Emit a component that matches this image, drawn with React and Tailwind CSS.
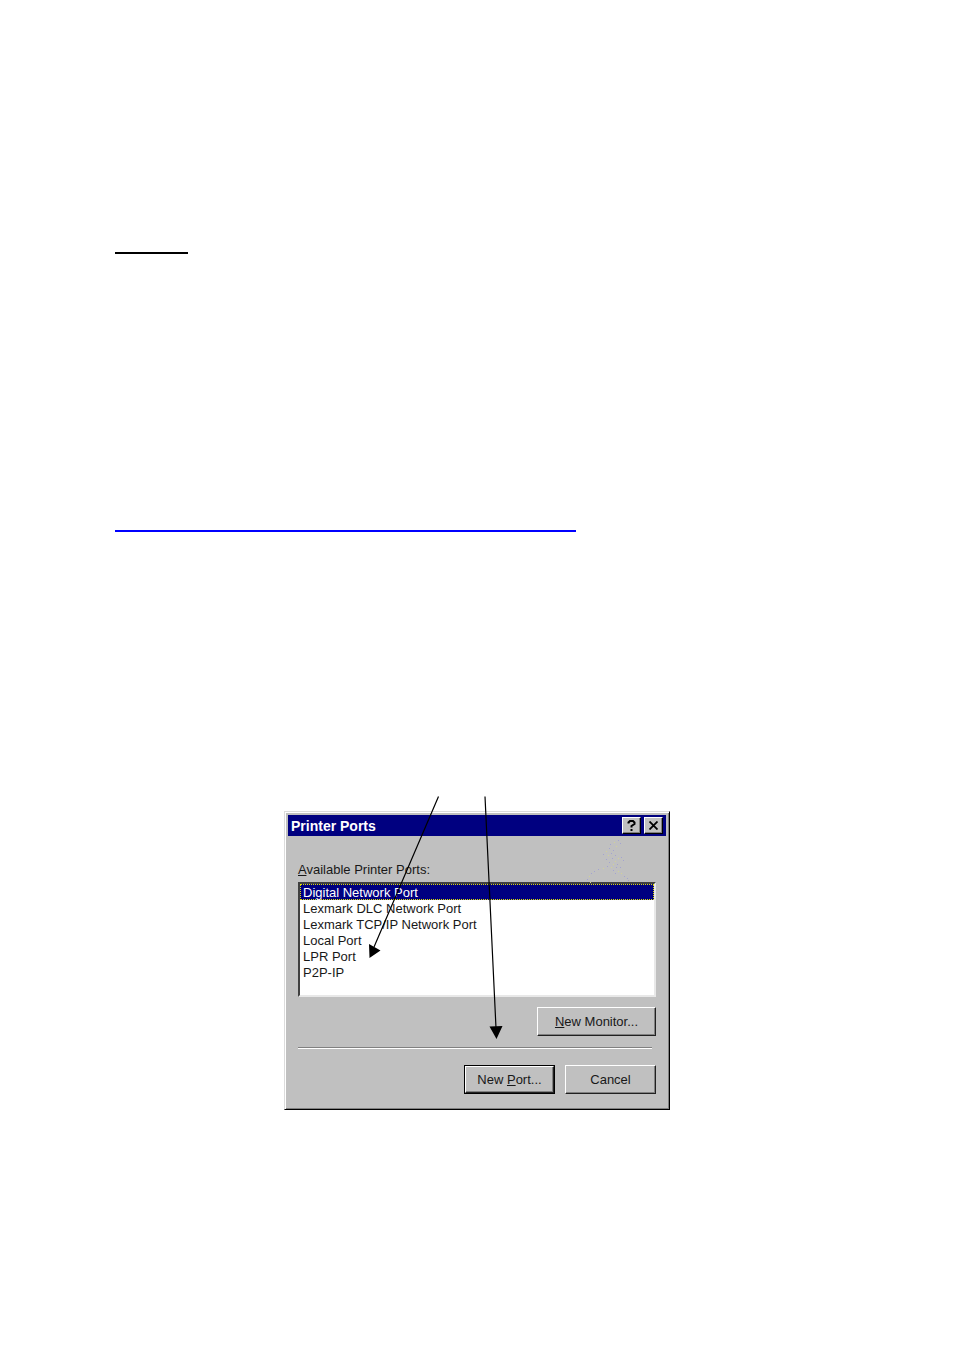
import React, { useState } from 'react';

const ports = [
  'Digital Network Port',
  'Lexmark DLC Network Port',
  'Lexmark TCP/IP Network Port',
  'Local Port',
  'LPR Port',
  'P2P-IP',
];

// faint speckles behind the upper right corner of the dialog
const specks = [
  [49, 0], [45, 2], [51, 3], [41, 4], [47, 6], [40, 8], [44, 10], [37, 11], [42, 13],
  [34, 14], [39, 15], [46, 15], [43, 18], [49, 18], [37, 19], [52, 17], [46, 21],
  [54, 20], [40, 22], [44, 24], [48, 24], [38, 26], [42, 27], [47, 27], [51, 27],
  [34, 28], [29, 29], [44, 30], [49, 31], [25, 31], [46, 33], [52, 33], [22, 33],
  [55, 36], [20, 36], [58, 38], [18, 39], [21, 42], [59, 40],
];

const Speckles = () => (
  <svg className="absolute right-9 top-7 h-11 w-16" viewBox="0 0 64 44" aria-hidden="true">
    {specks.map(([x, y], i) => (
      <rect key={i} x={x} y={y} width="1" height="1" fill={i % 3 === 1 ? '#d2d296' : '#a3a3d0'} />
    ))}
  </svg>
);

const Arrows = () => (
  <svg
    className="pointer-events-none absolute left-0 top-0 h-[244px] w-[386px]"
    viewBox="0 0 386 244"
    aria-hidden="true"
  >
    <path d="M154.500 0.500L90 151M201 0.500L212 232" stroke="#000" strokeWidth="1.200" fill="none" />
    <path d="M85.500 162L85 148L96.500 154.500ZM212.500 243L205.500 230.500L218.500 230Z" fill="#000" />
  </svg>
);

const TitleButton = ({ label, children }) => (
  <button
    type="button"
    aria-label={label}
    className="flex h-[17px] w-[19px] items-center justify-center border border-t-white border-l-white border-r-black border-b-black bg-[#c0c0c0] shadow-[inset_-1px_-1px_0_#808080]"
  >
    {children}
  </button>
);

const DialogButton = ({ className, children }) => (
  <button
    type="button"
    className={`h-[29px] border-t-white border-l-white border-r-[#202020] border-b-[#202020] bg-[#c0c0c0] text-[13px] shadow-[inset_-1px_-1px_0_#808080] ${className}`}
  >
    {children}
  </button>
);

const PrinterPortsDialog = () => {
  const [port, setPort] = useState(ports[0]);

  return (
    <section
      role="dialog"
      aria-labelledby="dialog-title"
      className="relative border border-t-[#dcdcdc] border-l-[#dcdcdc] border-r-black border-b-black bg-[#c0c0c0] pb-[15px] text-[13px] text-[#181818] shadow-[inset_1px_1px_0_#fff,inset_-1px_-1px_0_#808080]"
    >
      <header className="mx-[3px] mt-[3px] flex h-[21px] items-center gap-[3px] bg-[#000080] px-[3px]">
        <h1 id="dialog-title" className="flex-1 text-sm font-bold text-white">
          Printer Ports
        </h1>
        <TitleButton label="Help">
          <svg width="9" height="11" viewBox="0 0 9 11" aria-hidden="true">
            <path d="M1.500 3.500V2.500L3 1H6L7.500 2.500V4L4.500 6V7.500M4.500 9V11" stroke="#000" strokeWidth="2" fill="none" />
          </svg>
        </TitleButton>
        <TitleButton label="Close">
          <svg width="9" height="9" viewBox="0 0 9 9" aria-hidden="true">
            <path d="M0.500 0.500L8.500 8.500M8.500 0.500L0.500 8.500" stroke="#000" strokeWidth="1.800" fill="none" />
          </svg>
        </TitleButton>
      </header>
      <Speckles />

      <form className="px-[13px] pt-[26px]" onSubmit={(e) => e.preventDefault()}>
        <label htmlFor="ports" className="block h-5 leading-4">
          <u>A</u>vailable Printer Ports:
        </label>
        <select
          id="ports"
          size={6}
          value={port}
          onChange={(e) => setPort(e.target.value)}
          className="block h-[115px] w-full overflow-hidden rounded-none border-2 border-t-[#404040] border-l-[#404040] border-r-[#e8e8e8] border-b-[#e8e8e8] bg-white p-0 text-[13px] text-[#181818] outline-none"
        >
          {ports.map((name) => (
            <option
              key={name}
              value={name}
              className="block h-4 min-h-4 border border-transparent px-[2px] py-0 text-[13px] leading-[14px] checked:border-dotted checked:border-[#e0e000] checked:bg-[linear-gradient(#000080,#000080)] checked:[-webkit-text-fill-color:#fff]"
            >
              {name}
            </option>
          ))}
        </select>
        <div className="mt-[10px] flex justify-end">
          <DialogButton className="w-[119px] border">
            <u>N</u>ew Monitor...
          </DialogButton>
        </div>
        <hr className="mr-1 mt-[11px] h-[2px] border-0 border-t border-b border-t-[#808080] border-b-white" />
        <div className="mt-4 flex justify-end gap-[10px]">
          <DialogButton className="w-[91px] border-2 outline outline-black -outline-offset-1">
            New <u>P</u>ort...
          </DialogButton>
          <DialogButton className="w-[91px] border">Cancel</DialogButton>
        </div>
      </form>
    </section>
  );
};

const App = () => {
  return (
    <main className="min-h-screen bg-white px-[115px] pb-60 pt-[252px] font-['Liberation_Sans',Arial,sans-serif]">
      <hr className="h-[2px] w-[73px] border-0 bg-black" />
      <hr className="mt-[276px] h-[2px] w-[461px] max-w-full border-0 bg-[#0000ff]" />
      <div className="relative mx-auto mt-[264px] max-w-[386px] pt-[15px]">
        <PrinterPortsDialog />
        <Arrows />
      </div>
    </main>
  );
};

export default App;
